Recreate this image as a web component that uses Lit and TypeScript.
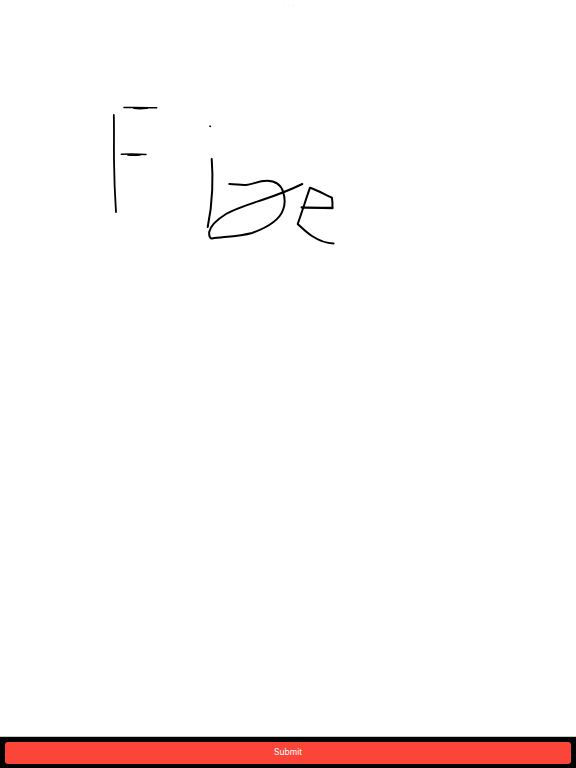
import { LitElement, html, css, svg } from "lit";
import { customElement } from "lit/decorators.js";

const strokes: [string, number][] = [
  ["M113.8 115 C114.2 130 113.8 145 114 160 C114.2 180 115 197 116 212", 1.8],
  ["M124 107.6 C135 107.4 146 107.6 156.7 107.8", 1.5],
  ["M134 108 C138 108.6 143 108.4 147 108", 2],
  ["M121.3 154.2 C130 154 138 154 146 154.4", 1.5],
  ["M128 154.8 C132 155.4 136 155.2 140 154.8", 1.8],
  ["M210 126.2 L210.4 126.4", 1.6],
  ["M211.7 159 C212.6 170 212.6 180 212.2 190 C211.6 205 210 216 207.7 227", 2],
  ["M229.3 184 C236 184 240 185.4 246 185 C253 184.4 258 180.8 267 180.8 C276 180.8 281 185 283.2 192 C285 198 285 205 283 210 C279 221 266 228 252 233 C240 236.4 224 236.8 212 238.4 C209.4 238.6 209 235 209.2 232 C210.4 226 217 219.6 226 214 C236 208.4 250 204 262 200 C274 196 290 190 302.3 184", 2],
  ["M301.7 207.4 C312 207.8 322 207.8 332.4 208", 2.3],
  ["M332.4 208 C332.8 204 332.4 201 331.9 197.7 C324 194 317 190 310 187.7 C306 199 302 212 297.7 224 C303 229 307 233 312 236 C318 240 325 243.4 333.6 243.4", 2],
];

@customElement("app-root")
export class AppRoot extends LitElement {
  static styles = css`
    :host {
      display: flex;
      flex-direction: column;
      width: 576px;
      height: 768px;
      background: #fff;
      font-family: "Liberation Sans", Arial, sans-serif;
    }
    .canvas {
      flex: 1;
      min-height: 0;
      position: relative;
    }
    .canvas svg {
      display: block;
      width: 576px;
      height: 736px;
    }
    .stroke {
      fill: none;
      stroke: #000;
      stroke-linecap: round;
      stroke-linejoin: round;
    }
    .handle {
      position: absolute;
      top: 5px;
      left: 284px;
      display: flex;
      gap: 3px;
    }
    .handle span {
      width: 1px;
      height: 1px;
      background: #f0f0f0;
    }
    .bar {
      flex: none;
      height: 32px;
      box-sizing: border-box;
      padding: 5px 5px 4px;
      background: #000;
      border-top: 1px solid #c8c8c8;
      display: flex;
    }
    .submit {
      flex: 1;
      margin: 0;
      border: 0;
      padding: 0 0 3px;
      border-radius: 3px;
      background: #fb4538;
      color: #fff;
      font: 400 8.5px "Inter", "Liberation Sans", sans-serif;
    }
  `;

  render() {
    return html`
      <div class="canvas">
        <svg viewBox="0 0 576 736" aria-label="Handwritten drawing">
          ${strokes.map(
            ([d, w]) => svg`<path class="stroke" d=${d} stroke-width=${w}></path>`
          )}
        </svg>
        <div class="handle"><span></span><span></span><span></span></div>
      </div>
      <div class="bar"><button class="submit">Submit</button></div>
    `;
  }
}
